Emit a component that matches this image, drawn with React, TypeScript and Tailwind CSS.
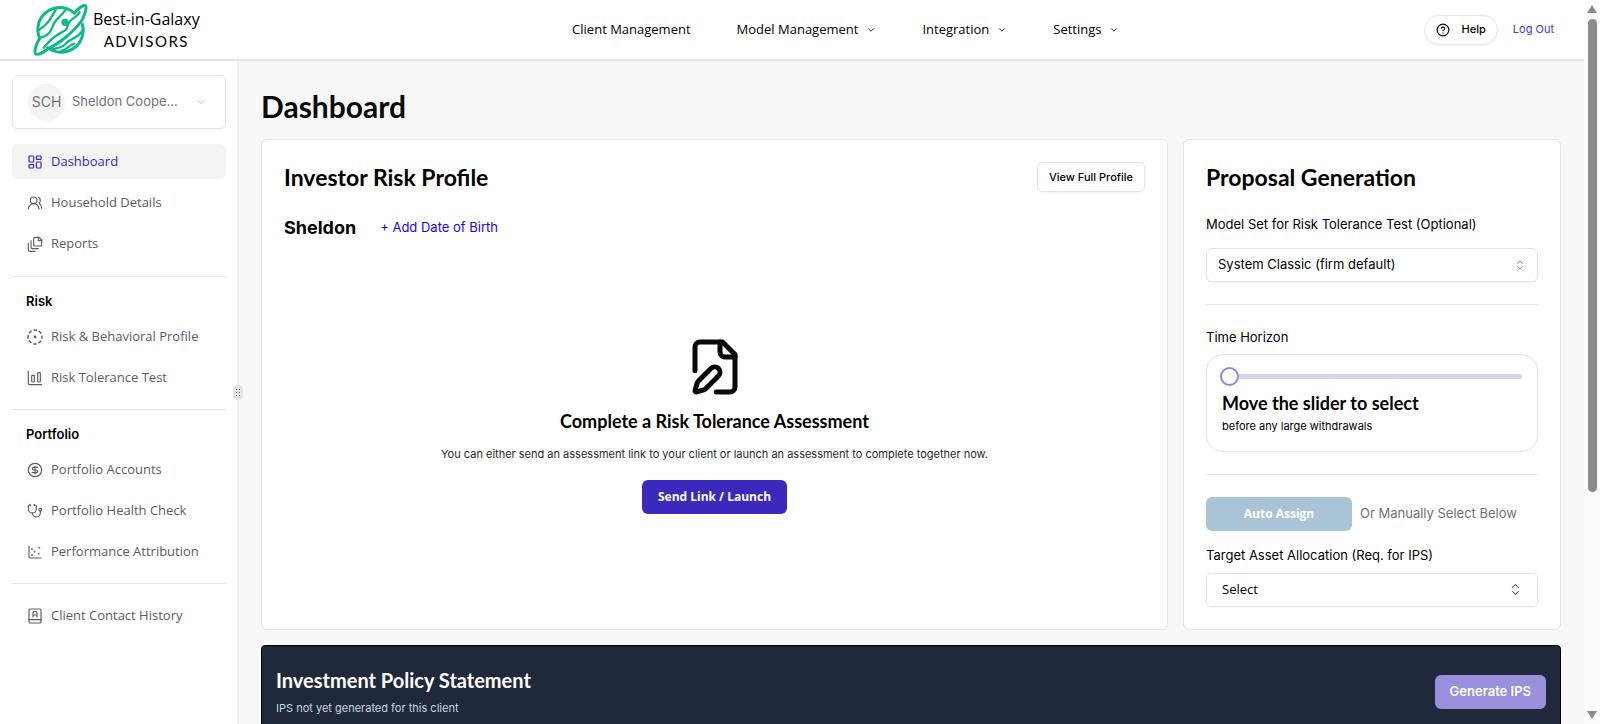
import { useState, type ReactNode } from "react";
import {
  ChartScatter,
  ChevronDown,
  ChevronsUpDown,
  CircleDollarSign,
  CircleHelp,
  LayoutDashboard,
  Stethoscope,
  UsersRound,
} from "lucide-react";

const heading = "font-['Lato',sans-serif] font-bold text-black";
const ui = "font-['Open_Sans',sans-serif]";

function Planet() {
  return (
    <svg width="56" height="54" viewBox="98 8 168 162" fill="none" stroke="#0fb88a" strokeWidth="9" strokeLinecap="round" strokeLinejoin="round">
      <path d="M246 72A66 66 0 0 1 142 142M118 114A66 66 0 0 1 222 38" />
      <path d="M222 38C236 22 250 12 256 17C260 24 252 48 243 62C222 92 180 128 142 146C124 160 110 164 105 160C102 152 108 132 118 114" />
      <path d="M238 36C230 50 214 54 206 66C198 82 204 88 184 96C164 106 146 122 130 142" strokeWidth="7" />
      <path d="M120 112C146 106 152 92 158 76C164 56 180 52 196 28" strokeWidth="7" />
      <path d="M117 88C138 74 148 62 166 28" strokeWidth="7" />
      <path d="M154 148C172 142 186 142 196 130C208 114 228 118 246 92" strokeWidth="7" />
      <path d="M182 152C200 150 206 134 222 130" strokeWidth="7" />
      <circle cx="194" cy="66" r="11" fill="#0fb88a" stroke="none" />
    </svg>
  );
}

function IconBase({ children }: { children: ReactNode }) {
  return (
    <svg width="16" height="16" viewBox="0 0 24 24" fill="none" stroke="currentColor" strokeWidth="1.75" strokeLinecap="round" strokeLinejoin="round" className="shrink-0">
      {children}
    </svg>
  );
}

const ReportsIcon = () => (
  <IconBase>
    <path d="M12 2h6l4 4v7a2 2 0 0 1-2 2h-8a2 2 0 0 1-2-2V4a2 2 0 0 1 2-2z" />
    <path d="M17 2v5h5M6 7v10a2 2 0 0 0 2 2h9M2 11v10a2 2 0 0 0 2 2h8" />
  </IconBase>
);

const RiskIcon = () => (
  <IconBase>
    <circle cx="12" cy="12" r="10.5" strokeWidth="2.25" strokeLinecap="butt" strokeDasharray="5.2 3.05" strokeDashoffset="2.6" />
    <circle cx="12" cy="12" r="1.25" fill="currentColor" />
  </IconBase>
);

const BarsIcon = () => (
  <IconBase>
    <path d="M2 2v18a2 2 0 0 0 2 2h18" />
    <rect x="7" y="8" width="4" height="10" rx="1" />
    <rect x="16" y="4" width="4" height="14" rx="1" />
  </IconBase>
);

const ContactIcon = () => (
  <IconBase>
    <rect x="3" y="1.5" width="18" height="21" rx="2" />
    <path d="M3 17.5h18M9 13.5V8a3 3 0 0 1 6 0v5.5M9 10.5h6" />
  </IconBase>
);

function FilePen() {
  return (
    <svg width="60" height="60" viewBox="0 0 24 24" fill="none" stroke="#080808" strokeWidth="2" strokeLinecap="round" strokeLinejoin="round">
      <path d="M12.5 22H18a2 2 0 0 0 2-2V7l-5-5H6a2 2 0 0 0-2 2v9.5" />
      <path d="M14 2v4a2 2 0 0 0 2 2h4" />
      <path d="M13.378 15.626a1 1 0 1 0-3.004-3.004l-5.01 5.012a2 2 0 0 0-.506.854l-.837 2.87a.5.5 0 0 0 .62.62l2.87-.837a2 2 0 0 0 .854-.506z" />
    </svg>
  );
}

interface NavItemProps {
  icon: ReactNode;
  label: string;
  active?: boolean;
}

function NavItem({ icon, label, active }: NavItemProps) {
  return (
    <a
      href="#"
      className={`flex h-[35px] items-center gap-2 rounded-md px-[15px] font-['Open_Sans',sans-serif] text-[13px] font-medium ${
        active ? "bg-[#f4f4f5] text-[#3a1fc4]" : "text-[#5c5c67]"
      }`}
    >
      {icon}
      {label}
    </a>
  );
}

function SectionTitle({ children }: { children: ReactNode }) {
  return <h3 className="px-[14px] pb-2.5 text-[13px] leading-4 font-semibold text-black">{children}</h3>;
}

function Sidebar() {
  const iconProps = { size: 16, strokeWidth: 1.75 };
  return (
    <aside className="relative w-[239px] shrink-0 border-r-2 border-[#efeff0] bg-white pt-[14px] pr-[11px] pl-3">
      <button className="flex h-[54px] w-full items-center rounded-md border border-[#e4e4e7] pr-[18px] pl-[15px] text-[#71717a] shadow-xs">
        <span className="flex size-[37px] items-center justify-center rounded-full bg-[#f4f4f5] text-sm">SCH</span>
        <span className="ml-[7px] flex-1 text-left text-[13px]">Sheldon Coope...</span>
        <ChevronDown size={12} strokeWidth={1.5} className="text-[#a1a1aa]" />
      </button>
      <nav className="mt-[15px]">
        <div className="flex flex-col gap-1.5 pb-[15px]">
          <NavItem active icon={<LayoutDashboard {...iconProps} />} label="Dashboard" />
          <NavItem icon={<UsersRound {...iconProps} />} label="Household Details" />
          <NavItem icon={<ReportsIcon />} label="Reports" />
        </div>
        <div className="border-t border-[#e4e4e7] pt-4 pb-[14px]">
          <SectionTitle>Risk</SectionTitle>
          <div className="flex flex-col gap-1.5">
            <NavItem icon={<RiskIcon />} label="Risk & Behavioral Profile" />
            <NavItem icon={<BarsIcon />} label="Risk Tolerance Test" />
          </div>
        </div>
        <div className="border-t border-[#e4e4e7] pt-4 pb-[14px]">
          <SectionTitle>Portfolio</SectionTitle>
          <div className="flex flex-col gap-1.5">
            <NavItem icon={<CircleDollarSign {...iconProps} />} label="Portfolio Accounts" />
            <NavItem icon={<Stethoscope {...iconProps} />} label="Portfolio Health Check" />
            <NavItem icon={<ChartScatter {...iconProps} />} label="Performance Attribution" />
          </div>
        </div>
        <div className="border-t border-[#e4e4e7] pt-[14px]">
          <NavItem icon={<ContactIcon />} label="Client Contact History" />
        </div>
      </nav>
      {/* resize grip */}
      <div className="absolute top-[324px] -right-1.5 flex h-[15px] w-2.5 items-center justify-center rounded-sm bg-[#e4e4e7]">
        <svg width="4" height="8" viewBox="0 0 4 8" fill="#71717a">
          <path d="M0 0h1v1H0zM3 0h1v1H3zM0 3h1v1H0zM3 3h1v1H3zM0 6h1v1H0zM3 6h1v1H3z" />
        </svg>
      </div>
    </aside>
  );
}

function Header() {
  return (
    <header className="flex h-[61px] shrink-0 items-center border-b-2 border-[#e4e4e4] bg-white">
      <a href="#" className="flex w-[268px] items-center gap-1 pl-[33px] text-black">
        <Planet />
        <span className="flex flex-col items-center">
          <span className={`${ui} text-base leading-[22px]`}>Best-in-Galaxy</span>
          <span className="font-['Lato',sans-serif] text-[15px] leading-[22px] tracking-widest">ADVISORS</span>
        </span>
      </a>
      <nav className={`${ui} flex flex-1 items-center justify-center gap-[46px] text-[13px] font-medium text-black`}>
        <a href="#">Client Management</a>
        {["Model Management", "Integration", "Settings"].map((label) => (
          <button key={label} className="flex items-center gap-2">
            {label}
            <ChevronDown size={10} />
          </button>
        ))}
      </nav>
      <div className="flex items-center gap-[15px] pr-[30px] text-[11px]">
        <button className="flex h-[30px] items-center gap-3 rounded-full border border-[#e4e4e7] px-[11px] font-medium text-black shadow-xs">
          <CircleHelp size={14} />
          Help
        </button>
        <a href="#" className="text-[#4a35cc]">
          Log Out
        </a>
      </div>
    </header>
  );
}

function RiskProfile() {
  return (
    <section className="flex flex-1 flex-col rounded-md border border-[#e4e4e7] bg-white p-[22px]">
      <div className="flex items-center justify-between">
        <h2 className={`${heading} text-[23px] leading-[30px]`}>Investor Risk Profile</h2>
        <button className="h-[30px] rounded-md border border-[#e4e4e7] px-[11px] text-[11px] font-medium text-black shadow-xs">
          View Full Profile
        </button>
      </div>
      <div className="mt-[22px] flex items-center gap-6">
        <h3 className="text-lg font-bold text-black">Sheldon</h3>
        <a href="#" className="text-[13px] text-[#2200f5]">
          + Add Date of Birth
        </a>
      </div>
      <div className="flex flex-1 flex-col items-center justify-center pt-0.5 text-center">
        <FilePen />
        <h4 className={`${heading} mt-3 text-lg leading-6`}>Complete a Risk Tolerance Assessment</h4>
        <p className="mt-[13px] text-[11px] leading-4 text-[#27272a]">
          You can either send an assessment link to your client or launch an assessment to complete together now.
        </p>
        <button className={`${ui} mt-[18px] h-[34px] rounded-md bg-[#3b28bd] px-4 text-xs font-bold text-white`}>
          Send Link / Launch
        </button>
      </div>
    </section>
  );
}

function Proposal() {
  const [years, setYears] = useState(0);
  return (
    <section className="w-[378px] shrink-0 rounded-md border border-[#e4e4e7] bg-white p-[22px] text-[13px] text-black">
      <h2 className={`${heading} text-[23px] leading-[30px]`}>Proposal Generation</h2>
      <label htmlFor="model-set" className="mt-[22px] block leading-5">
        Model Set for Risk Tolerance Test (Optional)
      </label>
      <div className="relative mt-[14px]">
        <select id="model-set" className="h-[34px] w-full appearance-none rounded-md border border-[#e4e4e7] bg-white px-[11px] shadow-xs">
          <option>System Classic (firm default)</option>
        </select>
        <ChevronsUpDown size={12} strokeWidth={1.5} className="pointer-events-none absolute top-[11px] right-3 text-[#71717a]" />
      </div>
      <hr className="my-[22px] border-[#e4e4e7]" />
      <label htmlFor="horizon" className="block leading-5">
        Time Horizon
      </label>
      <div className="mt-[7px] h-[98px] rounded-2xl border border-[#e4e4e7] pt-3 pr-[15px] pl-[13px]">
        <input
          id="horizon"
          type="range"
          min={0}
          max={30}
          value={years}
          onChange={(e) => setYears(Number(e.target.value))}
          className="block h-[18px] w-full appearance-none bg-transparent [&::-webkit-slider-runnable-track]:h-[5px] [&::-webkit-slider-runnable-track]:rounded-full [&::-webkit-slider-runnable-track]:bg-[#d8d4f2] [&::-webkit-slider-thumb]:-mt-[7px] [&::-webkit-slider-thumb]:size-[19px] [&::-webkit-slider-thumb]:appearance-none [&::-webkit-slider-thumb]:rounded-full [&::-webkit-slider-thumb]:border-2 [&::-webkit-slider-thumb]:border-[#9388da] [&::-webkit-slider-thumb]:bg-white"
        />
        <div className="pt-1.5 pl-0.5">
          <p className={`${heading} text-lg leading-6`}>Move the slider to select</p>
          <p className="mt-[3px] text-[11px] leading-4">before any large withdrawals</p>
        </div>
      </div>
      <hr className="my-[22px] border-[#e4e4e7]" />
      <div className="flex items-center gap-2 text-[#71717a]">
        <button className={`${ui} h-[34px] w-[146px] rounded-md bg-[#a9c4d6] text-xs font-bold text-white`}>Auto Assign</button>
        Or Manually Select Below
      </div>
      <label htmlFor="allocation" className="mt-[14px] block leading-5">
        Target Asset Allocation (Req. for IPS)
      </label>
      <div className="relative mt-2">
        <select id="allocation" className={`${ui} h-[34px] w-full appearance-none rounded-md border border-[#e4e4e7] bg-white px-[15px] text-[13px] shadow-xs`}>
          <option>Select</option>
        </select>
        <ChevronsUpDown size={15} strokeWidth={1.75} className="pointer-events-none absolute top-[9px] right-[15px] text-[#71717a]" />
      </div>
    </section>
  );
}

function PolicyStatement() {
  return (
    <section className="mt-[15px] flex h-[140px] shrink-0 items-start justify-between rounded-t-sm border border-black bg-[#1f293b] px-[14px] pt-[22px]">
      <div>
        <h2 className="font-['Lato',sans-serif] text-xl leading-6 font-bold text-white">Investment Policy Statement</h2>
        <p className="mt-2 text-[11px] leading-4 text-[#cbd5e1]">IPS not yet generated for this client</p>
      </div>
      <button className="mt-[7px] h-[34px] rounded-md bg-[#998fdc] px-[15px] text-[13px] font-semibold text-white">
        Generate IPS
      </button>
    </section>
  );
}

function ScrollRail() {
  return (
    <div aria-hidden="true" className="flex w-4 shrink-0 flex-col items-center justify-between bg-[#fcfcfc] py-[5px]">
      <svg width="10" height="8" viewBox="0 0 10 8" fill="#8b8b8b">
        <path d="M5 0L10 8H0z" />
      </svg>
      <div className="my-1.5 w-[9px] flex-1">
        <div className="h-[69%] rounded-full bg-[#8b8b8b]" />
      </div>
      <svg width="10" height="8" viewBox="0 0 10 8" fill="#8b8b8b">
        <path d="M5 8L10 0H0z" />
      </svg>
    </div>
  );
}

export default function App() {
  return (
    <div className="flex h-screen overflow-hidden bg-white font-['Inter',sans-serif]">
      <div className="flex min-w-0 flex-1 flex-col">
        <Header />
        <div className="flex min-h-0 flex-1">
          <Sidebar />
          <main className="flex min-w-0 flex-1 flex-col overflow-hidden bg-[#f8f8f8] pt-[27px] pr-[23px] pl-[22px]">
            <h1 className="font-['Lato',sans-serif] text-[30px] leading-9 font-bold text-[#09090b]">Dashboard</h1>
            <div className="mt-[15px] flex gap-[15px]">
              <RiskProfile />
              <Proposal />
            </div>
            <PolicyStatement />
          </main>
        </div>
      </div>
      <ScrollRail />
    </div>
  );
}
